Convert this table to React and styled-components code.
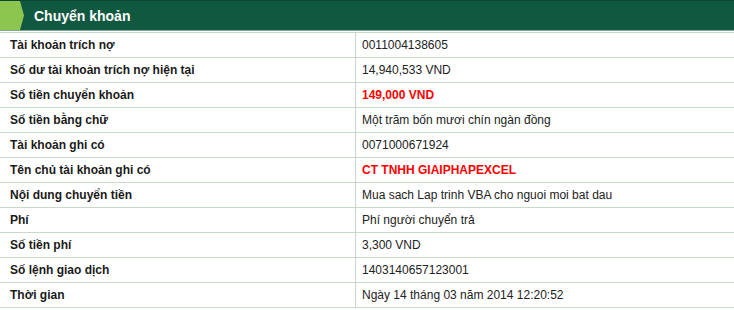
import styled, { createGlobalStyle } from 'styled-components'

const rows = [
    { label: 'Tài khoản trích nợ', value: '0011004138605' },
    { label: 'Số dư tài khoản trích nợ hiện tại', value: '14,940,533 VND' },
    { label: 'Số tiền chuyển khoản', value: '149,000 VND', red: true },
    { label: 'Số tiền bằng chữ', value: 'Một trăm bốn mươi chín ngàn đồng' },
    { label: 'Tài khoản ghi có', value: '0071000671924' },
    { label: 'Tên chủ tài khoản ghi có', value: 'CT TNHH GIAIPHAPEXCEL', red: true },
    { label: 'Nội dung chuyển tiền', value: 'Mua sach Lap trinh VBA cho nguoi moi bat dau' },
    { label: 'Phí', value: 'Phí người chuyển trả' },
    { label: 'Số tiền phí', value: '3,300 VND' },
    { label: 'Số lệnh giao dịch', value: '1403140657123001' },
    { label: 'Thời gian', value: 'Ngày 14 tháng 03 năm 2014 12:20:52' },
]

export default function App() {
    return (
        <Panel>
            <GlobalStyle />
            <Header>
                <Chevron />
                <Title>Chuyển khoản</Title>
            </Header>
            <Table>
                {rows.map((r) => (
                    <Row key={r.label}>
                        <Label>{r.label}</Label>
                        <Value $red={r.red}>{r.value}</Value>
                    </Row>
                ))}
            </Table>
        </Panel>
    )
}

const GlobalStyle = createGlobalStyle`
    body {
        margin: 0;
        background: #fff;
        font-family: "Liberation Sans", Arial, sans-serif;
    }
`
const Panel = styled.div`
    width: 734px;
`
const Header = styled.div`
    height: 29px;
    display: flex;
    align-items: center;
    background: #115840;
    border-top: 1px solid #0a4530;
    border-bottom: 1px solid #7fa892;
    position: relative;
`
const Chevron = styled.div`
    position: absolute;
    left: 0;
    top: 0;
    width: 24px;
    height: 29px;
    background: #8cc64f;
    clip-path: polygon(0 0, 20px 0, 24px 50%, 20px 100%, 0 100%);
`
const Title = styled.h2`
    margin: 0 0 0 34px;
    font-size: 14px;
    font-weight: bold;
    color: #fff;
`
const Table = styled.div`
    border-top: 1px solid #c9d9c9;
    margin-top: 1px;
`
const Row = styled.div`
    display: grid;
    grid-template-columns: 356px 1fr;
    height: 24px;
    border-bottom: 1px solid #c9d9c9;
`
const Label = styled.div`
    display: flex;
    align-items: center;
    padding-left: 10px;
    font-size: 12px;
    font-weight: bold;
    color: #1a1a1a;
    border-right: 1px solid #c9d9c9;
`
const Value = styled.div`
    display: flex;
    align-items: center;
    padding-left: 6px;
    font-size: 12px;
    font-weight: ${(p) => (p.$red ? 'bold' : 'normal')};
    color: ${(p) => (p.$red ? '#ff0000' : '#222')};
`
